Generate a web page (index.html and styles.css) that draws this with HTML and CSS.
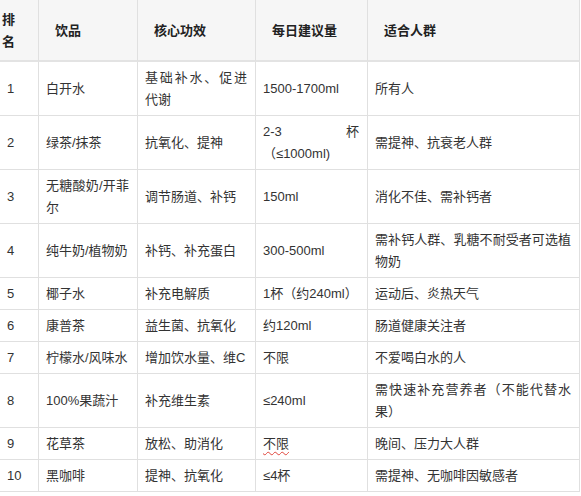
FILE: index.html
```html
<!DOCTYPE html>
<html lang="zh-CN">
<head>
<meta charset="utf-8">
<title>饮品排名</title>
<link rel="stylesheet" href="styles.css">
</head>
<body>
<table class="drinks">
  <colgroup>
    <col class="c1"><col class="c2"><col class="c3"><col class="c4"><col class="c5">
  </colgroup>
  <thead>
    <tr>
      <th class="rank-h">排名</th>
      <th>饮品</th>
      <th>核心功效</th>
      <th>每日建议量</th>
      <th>适合人群</th>
    </tr>
  </thead>
  <tbody>
    <tr><td>1</td><td>白开水</td><td>基础补水、促进代谢</td><td>1500-1700ml</td><td>所有人</td></tr>
    <tr><td>2</td><td>绿茶/抹茶</td><td>抗氧化、提神</td><td><span class="spread"><span>2-3</span><span>杯</span></span>（≤1000ml)</td><td>需提神、抗衰老人群</td></tr>
    <tr><td>3</td><td>无糖酸奶/开菲尔</td><td>调节肠道、补钙</td><td>150ml</td><td>消化不佳、需补钙者</td></tr>
    <tr><td>4</td><td>纯牛奶/植物奶</td><td>补钙、补充蛋白</td><td>300-500ml</td><td>需补钙人群、乳糖不耐受者可选植物奶</td></tr>
    <tr><td>5</td><td>椰子水</td><td>补充电解质</td><td>1杯（约240ml）</td><td>运动后、炎热天气</td></tr>
    <tr><td>6</td><td>康普茶</td><td>益生菌、抗氧化</td><td>约120ml</td><td>肠道健康关注者</td></tr>
    <tr><td>7</td><td>柠檬水/风味水</td><td>增加饮水量、维C</td><td>不限</td><td>不爱喝白水的人</td></tr>
    <tr><td>8</td><td>100%果蔬汁</td><td>补充维生素</td><td>≤240ml</td><td>需快速补充营养者（不能代替水果）</td></tr>
    <tr><td>9</td><td>花草茶</td><td>放松、助消化</td><td><span class="spell">不限</span></td><td>晚间、压力大人群</td></tr>
    <tr><td>10</td><td>黑咖啡</td><td>提神、抗氧化</td><td>≤4杯</td><td>需提神、无咖啡因敏感者</td></tr>
  </tbody>
</table>
</body>
</html>
```

FILE: styles.css
```css
html, body {
  margin: 0;
  padding: 0;
  background: #ffffff;
}

body {
  font-family: "Liberation Sans", "Noto Sans CJK SC", sans-serif;
  font-size: 13px;
  color: #333333;
}

.drinks {
  width: 580px;
  table-layout: fixed;
  border-collapse: separate;
  border-spacing: 0;
}

.c1 { width: 39px; }
.c2 { width: 99px; }
.c3 { width: 118px; }
.c4 { width: 112px; }
.c5 { width: 212px; }

.drinks th,
.drinks td {
  box-sizing: border-box;
  border-right: 1px solid #e0e0e0;
  vertical-align: middle;
  line-height: 22px;
  text-align: justify;
}

.drinks th {
  background: #f6f6f6;
  color: #222222;
  font-weight: bold;
  padding: 9px 8px 7px 16px;
  border-bottom: 2px solid #e3e3e3;
  text-align: left;
}

.drinks th.rank-h {
  padding-left: 2px;
  padding-right: 12px;
}

.drinks td {
  padding: 5px 8px 4px 7px;
  border-bottom: 1px solid #e0e0e0;
}

.spread {
  display: flex;
  justify-content: space-between;
}

.spell {
  text-decoration: underline wavy #e0463c;
  text-decoration-thickness: 1px;
  text-underline-offset: 3px;
}
```
